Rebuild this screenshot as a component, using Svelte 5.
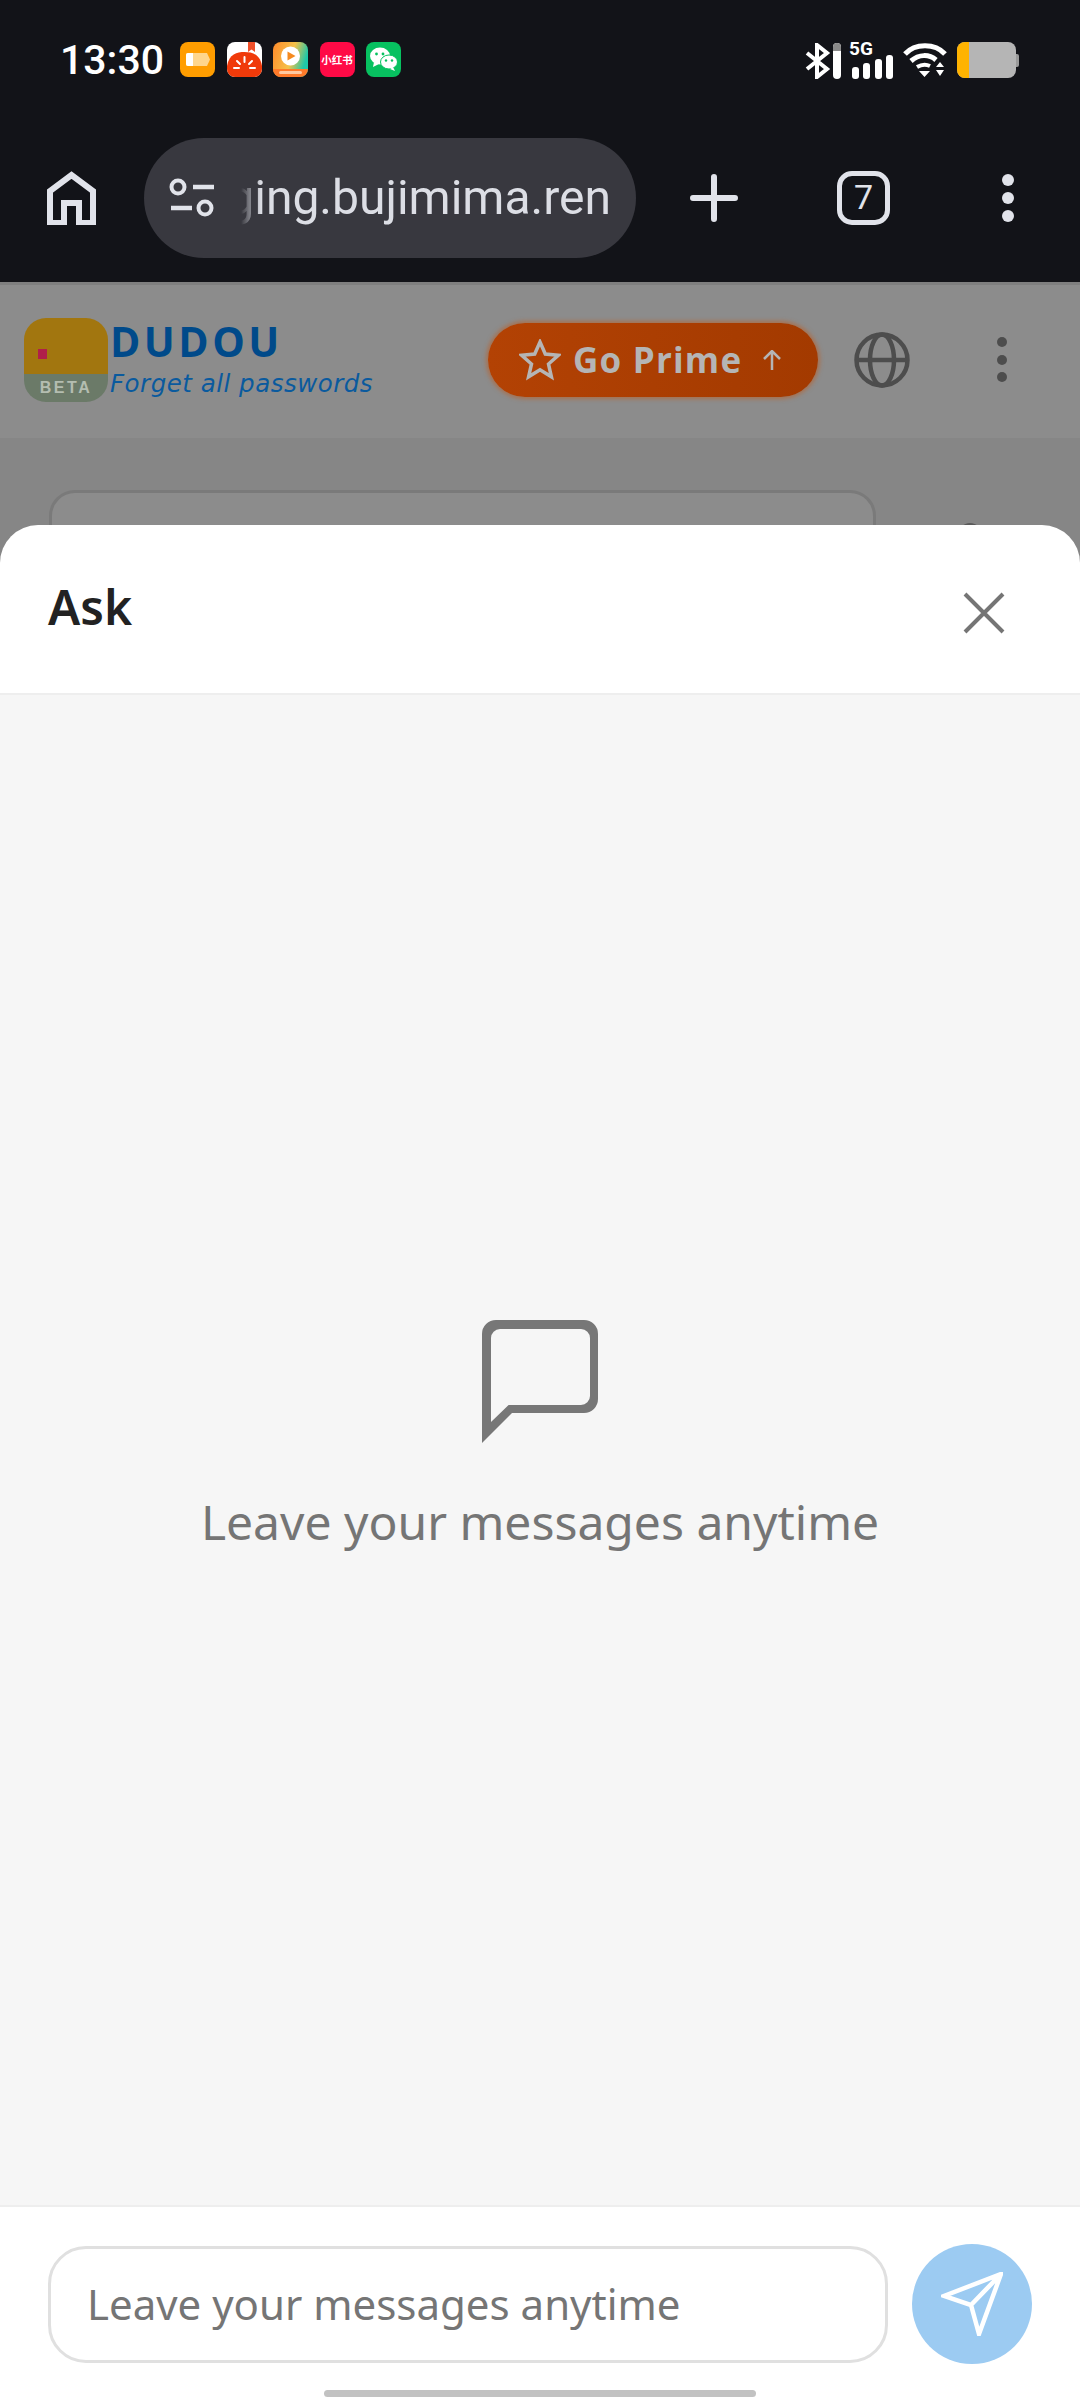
<script>
  const bars = [12, 16, 20, 24];
</script>

<div class="screen">
  <header class="chrome">
    <div class="status">
      <span class="time">13:30</span>
      <div class="apps">
        <svg width="35" height="35" viewBox="0 0 35 35">
          <rect width="35" height="35" rx="8" fill="#ff9d00" />
          <path d="M8 11h19l3 6.500-3 6.500H8a2 2 0 0 1-2-2V13a2 2 0 0 1 2-2z" fill="#ffd68c" />
          <path d="M8 11h5v13H8a2 2 0 0 1-2-2V13a2 2 0 0 1 2-2z" fill="#fff" />
        </svg>
        <svg width="35" height="35" viewBox="0 0 35 35">
          <rect width="35" height="35" rx="8" fill="#fff" />
          <path d="M0 24C2 12 10 10 17.500 10S33 12 35 24v3a8 8 0 0 1-8 8H8a8 8 0 0 1-8-8z" fill="#f03a0a" />
          <path d="M21 0h7v10l-3.500-2.500L21 10z" fill="#f0502a" />
          <path d="M17.500 15v5M10 19l3 3M25 19l-3 3M7 26h5M23 26h5" stroke="#fff" stroke-width="2" stroke-linecap="round" />
        </svg>
        <svg width="35" height="35" viewBox="0 0 35 35">
          <defs>
            <linearGradient id="g1" x1="0" y1="0" x2="1" y2="0.3">
              <stop offset="0" stop-color="#ff8a2a" />
              <stop offset="0.6" stop-color="#f5c24a" />
              <stop offset="1" stop-color="#1fc7a8" />
            </linearGradient>
          </defs>
          <rect width="35" height="35" rx="8" fill="url(#g1)" />
          <path d="M0 27h35v0a8 8 0 0 1-8 8H8a8 8 0 0 1-8-8z" fill="#ff7a2a" />
          <circle cx="17.500" cy="14" r="9.500" fill="#fff" />
          <path d="M14.500 9.500l8 4.500-8 4.500z" fill="#f58a20" />
          <rect x="6" y="29" width="23" height="3" rx="1.500" fill="#ffc9a0" />
        </svg>
        <div class="red-app">小红书</div>
        <svg width="35" height="35" viewBox="0 0 35 35">
          <rect width="35" height="35" rx="8" fill="#07c160" />
          <ellipse cx="14" cy="14" rx="10" ry="8.500" fill="#fff" />
          <path d="M8 20l-1 5 6-3z" fill="#fff" />
          <ellipse cx="23" cy="20" rx="8.500" ry="7" fill="#fff" stroke="#07c160" stroke-width="1" />
          <path d="M27 25l2 4-5-2z" fill="#fff" />
          <circle cx="10.500" cy="12" r="1.400" fill="#07c160" />
          <circle cx="17" cy="12" r="1.400" fill="#07c160" />
          <circle cx="20" cy="18.500" r="1.200" fill="#07c160" />
          <circle cx="26" cy="18.500" r="1.200" fill="#07c160" />
        </svg>
      </div>
      <div class="sys">
        <svg class="bt" width="36" height="36" viewBox="0 0 36 36">
          <path d="M2 10l20 16-10 8V2l10 8L2 26" fill="none" stroke="#fff" stroke-width="4" />
          <rect x="28" y="0" width="8" height="36" rx="4" fill="#fff" />
          <path d="M28 8V4a4 4 0 0 1 8 0v4z" fill="#8a8a8a" />
        </svg>
        <div class="cell">
          <span class="five-g">5G</span>
          <div class="bars">
            {#each bars as h}
              <i style="height: {h}px"></i>
            {/each}
          </div>
        </div>
        <svg class="wifi" width="44" height="35" viewBox="0 0 44 35">
          <path d="M2 11C12 0 32 0 42 11" fill="none" stroke="#fff" stroke-width="5" />
          <path d="M8 18c8-7 18-7 25-1" fill="none" stroke="#fff" stroke-width="5" />
          <path d="M14 24c5-3 9-3 13-1" fill="none" stroke="#fff" stroke-width="4" />
          <path d="M16 28h11l-5.500 6zM33 24l4-5 4 5zM33 27h8l-4 6z" fill="#fff" />
        </svg>
        <div class="battery">
          <div class="level"></div>
          <div class="nub"></div>
        </div>
      </div>
    </div>

    <div class="toolbar">
      <svg class="home" width="49" height="54" viewBox="0 0 49 54">
        <path d="M3 52V20L24.500 4 46 20v32H32V32H17v20z" fill="none" stroke="#e1e3ea" stroke-width="6" />
      </svg>
      <div class="omnibox">
        <svg width="46" height="40" viewBox="0 0 46 40">
          <circle cx="9" cy="9" r="6.500" fill="none" stroke="#e1e3ea" stroke-width="4" />
          <path d="M24 9h21M2 30h21" stroke="#e1e3ea" stroke-width="4.500" />
          <circle cx="36" cy="30" r="6.500" fill="none" stroke="#e1e3ea" stroke-width="4" />
        </svg>
        <div class="url"><span>ging.bujimima.ren</span></div>
      </div>
      <svg class="plus" width="48" height="48" viewBox="0 0 48 48">
        <path d="M24 3v42M3 24h42" stroke="#e1e3ea" stroke-width="6" stroke-linecap="round" />
      </svg>
      <div class="tabs">7</div>
      <div class="kebab light"><i></i><i></i><i></i></div>
    </div>
  </header>

  <div class="site">
    <div class="site-head">
      <div class="logo">
        <div class="logo-top"><i></i></div>
        <div class="logo-beta">BETA</div>
      </div>
      <div class="brand">
        <div class="brand-name">DUDOU</div>
        <div class="brand-tag">Forget all passwords</div>
      </div>
      <div class="prime">
        <svg width="42" height="42" viewBox="0 0 42 42">
          <path d="M21 3l5.300 12 13 1.300-9.800 8.700 2.900 12.800L21 30.800 9.600 37.800l2.900-12.800-9.800-8.700 13-1.300z" fill="none" stroke="#b5b5b5" stroke-width="3.500" />
        </svg>
        <span>Go Prime</span>
        <svg width="22" height="20" viewBox="0 0 22 20">
          <path d="M11 20V2M3 9l8-8 8 8" fill="none" stroke="#b5b5b5" stroke-width="2.500" />
        </svg>
      </div>
      <svg class="globe" width="56" height="56" viewBox="0 0 56 56">
        <g fill="none" stroke="#4d4d4d" stroke-width="4.500">
          <circle cx="28" cy="28" r="25.500" />
          <ellipse cx="28" cy="28" rx="12" ry="25.500" />
          <path d="M3 28h50" />
        </g>
      </svg>
      <div class="kebab dark"><i></i><i></i><i></i></div>
    </div>
    <div class="site-body">
      <div class="site-input"></div>
      <div class="site-avatar"></div>
    </div>
  </div>

  <section class="sheet">
    <div class="sheet-head">
      <h2>Ask</h2>
      <svg width="42" height="42" viewBox="0 0 42 42">
        <path d="M2 2l38 38M40 2L2 40" stroke="#757575" stroke-width="4" />
      </svg>
    </div>
    <div class="sheet-body">
      <svg width="116" height="123" viewBox="0 0 116 123">
        <path fill-rule="evenodd" fill="#777" d="M0 123V14A14 14 0 0 1 14 0h88a14 14 0 0 1 14 14v65a14 14 0 0 1-14 14H30zM9 102L26.600 85H99a9 9 0 0 0 9-9V18a9 9 0 0 0-9-9H18a9 9 0 0 0-9 9z" />
      </svg>
      <p>Leave your messages anytime</p>
    </div>
    <div class="sheet-foot">
      <div class="field">Leave your messages anytime</div>
      <div class="send">
        <svg width="62" height="64" viewBox="0 0 62 64">
          <path d="M60 2L3 24l27 9 8 29zM60 2L30 33" fill="none" stroke="#fff" stroke-width="4.500" stroke-linejoin="miter" />
        </svg>
      </div>
    </div>
    <div class="gesture"></div>
  </section>
</div>

<style>
  :global(body) {
    margin: 0;
    background: #121318;
  }

  .screen {
    position: relative;
    width: 1080px;
    height: 2400px;
    overflow: hidden;
    font-family: "Noto Sans", "Open Sans", sans-serif;
  }

  .chrome {
    height: 282px;
    background: #121318;
    display: flex;
    flex-direction: column;
  }

  .status {
    display: flex;
    align-items: flex-start;
    padding: 42px 64px 0 60px;
    height: 54px;
  }

  .time {
    font-family: Roboto, sans-serif;
    font-weight: 500;
    font-size: 41px;
    line-height: 36px;
    color: #fff;
    width: 120px;
  }

  .apps {
    display: flex;
    gap: 11.500px;
  }

  .red-app {
    width: 35px;
    height: 35px;
    border-radius: 8px;
    background: #ff0a46;
    color: #fff;
    font-family: "Noto Sans CJK SC", sans-serif;
    font-size: 10.500px;
    line-height: 35px;
    text-align: center;
    font-weight: 700;
    white-space: nowrap;
  }

  .sys {
    margin-left: auto;
    display: flex;
    align-items: flex-start;
  }

  .bt {
    margin-right: 10px;
    margin-top: 1px;
  }

  .cell {
    position: relative;
    width: 42px;
    height: 36px;
    margin-right: 10px;
  }

  .five-g {
    position: absolute;
    left: -2px;
    top: -3px;
    font-size: 19px;
    line-height: 20px;
    font-weight: 700;
    color: #fff;
    font-family: Roboto, sans-serif;
  }

  .bars {
    position: absolute;
    left: 1px;
    right: 0;
    bottom: -1px;
    display: flex;
    align-items: flex-end;
    justify-content: space-between;
  }

  .bars i {
    width: 7px;
    background: #fff;
    border-radius: 3px;
  }

  .wifi {
    margin-right: 10px;
    margin-top: 1px;
  }

  .battery {
    width: 59px;
    height: 36px;
    background: #b5b5b5;
    border-radius: 8px;
    position: relative;
  }

  .level {
    width: 12px;
    height: 36px;
    background: #ffb300;
    border-radius: 8px 0 0 8px;
  }

  .nub {
    position: absolute;
    left: 59px;
    top: 12px;
    width: 3px;
    height: 13px;
    background: #9a9a9a;
    border-radius: 0 2px 2px 0;
  }

  .toolbar {
    display: flex;
    align-items: center;
    height: 120px;
    margin-top: 42px;
    padding-left: 47px;
  }

  .home {
    margin-right: 48px;
  }

  .omnibox {
    width: 492px;
    height: 120px;
    flex: none;
    border-radius: 60px;
    background: #38383f;
    display: flex;
    align-items: center;
    padding-left: 25px;
    box-sizing: border-box;
  }

  .url {
    margin-left: 26px;
    width: 370px;
    overflow: hidden;
    display: flex;
    justify-content: flex-end;
    font-family: Roboto, sans-serif;
    font-size: 48px;
    line-height: 64px;
    color: #dcdee5;
    white-space: nowrap;
    -webkit-mask-image: linear-gradient(90deg, transparent 0, #000 20px);
    mask-image: linear-gradient(90deg, transparent 0, #000 20px);
  }

  .plus {
    margin-left: 54px;
  }

  .tabs {
    margin-left: 99px;
    width: 53px;
    height: 54px;
    box-sizing: border-box;
    border: 5.500px solid #e1e3ea;
    border-radius: 15px;
    color: #e1e3ea;
    font-family: Roboto, sans-serif;
    font-size: 34px;
    line-height: 43px;
    text-align: center;
  }

  .kebab {
    display: flex;
    flex-direction: column;
  }

  .kebab.light {
    margin-left: 112px;
    gap: 6px;
  }

  .kebab.light i {
    width: 12px;
    height: 12px;
    border-radius: 50%;
    background: #e1e3ea;
  }

  .kebab.dark {
    margin-left: 87px;
    gap: 7.500px;
  }

  .kebab.dark i {
    width: 10px;
    height: 10px;
    border-radius: 50%;
    background: #4d4d4d;
  }

  .site {
    height: 2118px;
    background: #868686;
  }

  .site-head {
    height: 156px;
    background: #8c8c8c;
    border-top: 3px solid #7f7f7f;
    box-sizing: border-box;
    display: flex;
    align-items: center;
    padding: 0 0 4px 24px;
  }

  .logo {
    width: 84px;
    height: 84px;
    border-radius: 22px;
    overflow: hidden;
    flex: none;
  }

  .logo-top {
    height: 56px;
    background: #a2760f;
    position: relative;
  }

  .logo-top i {
    position: absolute;
    left: 14px;
    top: 31px;
    width: 9px;
    height: 10px;
    background: #b01f4a;
  }

  .logo-beta {
    height: 28px;
    background: #6b7a68;
    color: #b4bdb0;
    font-family: "Liberation Sans", sans-serif;
    font-weight: 700;
    font-size: 16px;
    letter-spacing: 2.500px;
    line-height: 27px;
    text-align: center;
  }

  .brand {
    margin-left: 2px;
    margin-top: -2px;
    width: 378px;
    flex: none;
  }

  .brand-name {
    font-family: "Open Sans", sans-serif;
    font-weight: 700;
    font-size: 41px;
    line-height: 46px;
    letter-spacing: 3.500px;
    color: #004a8a;
  }

  .brand-tag {
    font-family: "DejaVu Sans", sans-serif;
    font-style: oblique;
    font-weight: 200;
    font-size: 24.500px;
    line-height: 30px;
    color: #0a5a9e;
    white-space: nowrap;
    margin-top: 5px;
    letter-spacing: 0.500px;
  }

  .prime {
    width: 330px;
    height: 74px;
    flex: none;
    border-radius: 37px;
    background: linear-gradient(90deg, #b34204, #a33a00);
    box-shadow: 0 0 4px 2px #a9704e;
    display: flex;
    align-items: center;
    box-sizing: border-box;
    padding-left: 31px;
    color: #b5b5b5;
    font-family: "Open Sans", sans-serif;
    font-weight: 700;
    font-size: 35px;
    letter-spacing: 1.200px;
  }

  .prime span {
    margin-left: 12px;
    margin-right: 19px;
  }

  .globe {
    margin-left: 36px;
    flex: none;
  }

  .site-body {
    display: flex;
    padding: 52px 0 0 49px;
    align-items: flex-start;
  }

  .site-input {
    width: 827px;
    height: 120px;
    box-sizing: border-box;
    border: 3px solid #7a7a7a;
    border-radius: 26px;
    background: #8c8c8c;
  }

  .site-avatar {
    width: 24px;
    height: 24px;
    border-radius: 50%;
    background: #5a5a5a;
    margin: 33px 0 0 82px;
  }

  /* the sheet lies over the dimmed page */
  .sheet {
    position: absolute;
    left: 0;
    right: 0;
    top: 525px;
    bottom: 0;
    display: flex;
    flex-direction: column;
    background: #fff;
    border-radius: 38px 38px 0 0;
    overflow: hidden;
  }

  .sheet-head {
    height: 168px;
    flex: none;
    display: flex;
    align-items: center;
    justify-content: space-between;
    padding: 0 75px 0 48px;
    border-bottom: 2px solid #eeeeee;
  }

  .sheet-head h2 {
    margin: 0 0 4px;
    font-size: 48px;
    font-weight: 600;
    line-height: 68px;
    color: #222;
  }

  .sheet-head svg {
    margin-top: 8px;
  }

  .sheet-body {
    flex: 1;
    background: #f6f6f6;
    display: flex;
    flex-direction: column;
    align-items: center;
    padding-top: 625px;
  }

  .sheet-body p {
    margin: 48px 0 0;
    font-size: 48px;
    line-height: 62px;
    color: #757575;
  }

  .sheet-foot {
    height: 195px;
    flex: none;
    box-sizing: border-box;
    border-top: 2px solid #eeeeee;
    display: flex;
    align-items: flex-start;
    padding: 37px 0 0 48px;
  }

  .field {
    width: 840px;
    height: 117px;
    margin-top: 2px;
    box-sizing: border-box;
    border: 3px solid #e0e0e0;
    border-radius: 38px;
    padding-left: 36px;
    font-size: 42px;
    line-height: 110px;
    color: #757575;
  }

  .send {
    width: 120px;
    height: 120px;
    margin-left: 24px;
    border-radius: 50%;
    background: #9ccbf2;
    display: flex;
    align-items: center;
    justify-content: center;
  }

  /* navigation pill over the footer */
  .gesture {
    position: absolute;
    left: 324px;
    bottom: 3px;
    width: 432px;
    height: 7px;
    border-radius: 4px;
    background: #c2c2c2;
  }
</style>
